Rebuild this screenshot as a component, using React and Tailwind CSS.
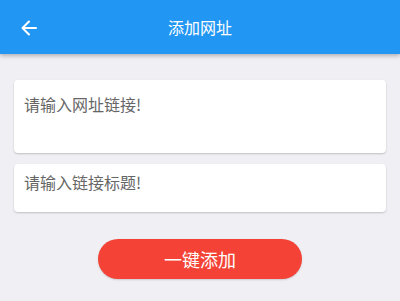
export default function App() {
  return (
    <div className="w-[400px] h-[301px] bg-[#efeff4] flex flex-col overflow-hidden" style={{ fontFamily: '"Noto Sans CJK SC", "Noto Sans", sans-serif' }}>
      <div className="h-[54px] bg-[#2196f3] flex items-center relative shadow-[0_2px_4px_rgba(0,0,0,0.25)] shrink-0">
        <div className="absolute left-[21px] top-[20px] w-4 h-4">
          <svg viewBox="0 0 16 16" width="16" height="16" fill="none" stroke="white" strokeWidth="2" strokeLinecap="round" strokeLinejoin="round">
            <path d="M15 8H1.5M8 1.5L1.5 8L8 14.5" />
          </svg>
        </div>
        <div className="w-full text-center text-white text-[16px] leading-none">添加网址</div>
      </div>
      <div className="px-[14px] pt-[26px] flex flex-col gap-[11px]">
        <div className="h-[73px] bg-white rounded-[4px] shadow-[0_1px_2px_rgba(0,0,0,0.2)] px-[10px] pt-[14px] text-[16px] leading-[20px] text-[#666]">请输入网址链接!</div>
        <div className="h-[48px] bg-white rounded-[4px] shadow-[0_1px_2px_rgba(0,0,0,0.2)] px-[10px] pt-[8px] text-[16px] leading-[20px] text-[#666]">请输入链接标题!</div>
      </div>
      <div className="flex justify-center pt-[27px]">
        <div className="w-[204px] h-[40px] rounded-full bg-[#f44336] text-white text-[18px] flex items-center justify-center shadow-[0_1px_2px_rgba(0,0,0,0.15)]">一键添加</div>
      </div>
    </div>
  );
}
